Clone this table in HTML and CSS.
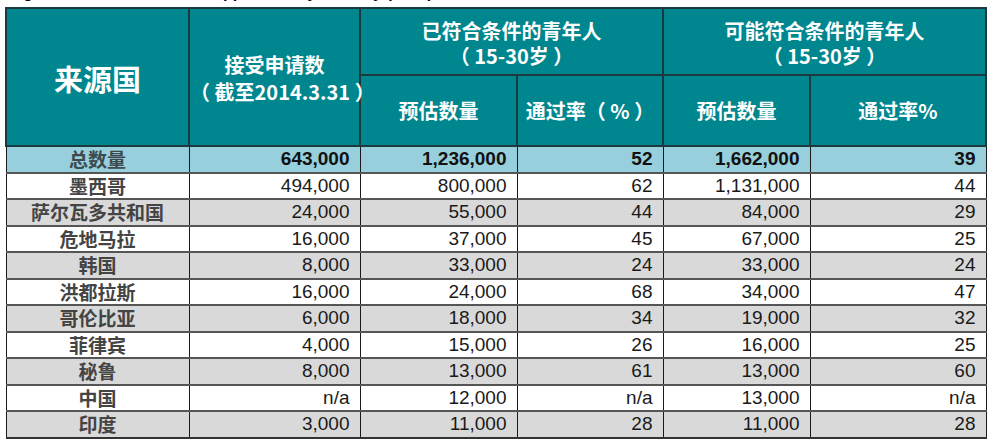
FILE: index.html
```html
<!DOCTYPE html>
<html lang="zh">
<head>
<meta charset="utf-8">
<title>来源国</title>
<link rel="stylesheet" href="styles.css">
</head>
<body>
<div class="page">
  <div class="caption"><span>Figure 2: Estimated DACA Applicants by Country (2014)</span></div>
  <table class="data">
    <colgroup>
      <col class="c1"><col class="c2"><col class="c3"><col class="c4"><col class="c5"><col class="c6">
    </colgroup>
    <thead>
      <tr class="h1">
        <th rowspan="2" class="big">来源国</th>
        <th rowspan="2" class="two"><span class="ln">接受申请数</span><span class="ln">（ 截至2014.3.31 ）</span></th>
        <th colspan="2"><span class="ln">已符合条件的青年人</span><span class="ln">（ 15-30岁 ）</span></th>
        <th colspan="2"><span class="ln">可能符合条件的青年人</span><span class="ln">（ 15-30岁 ）</span></th>
      </tr>
      <tr class="h2">
        <th>预估数量</th>
        <th>通过率（ % ）</th>
        <th>预估数量</th>
        <th>通过率%</th>
      </tr>
    </thead>
    <tbody>
      <tr class="total"><td class="name">总数量</td><td>643,000</td><td>1,236,000</td><td>52</td><td>1,662,000</td><td>39</td></tr>
      <tr class="w"><td class="name">墨西哥</td><td>494,000</td><td>800,000</td><td>62</td><td>1,131,000</td><td>44</td></tr>
      <tr class="g"><td class="name">萨尔瓦多共和国</td><td>24,000</td><td>55,000</td><td>44</td><td>84,000</td><td>29</td></tr>
      <tr class="w"><td class="name">危地马拉</td><td>16,000</td><td>37,000</td><td>45</td><td>67,000</td><td>25</td></tr>
      <tr class="g"><td class="name">韩国</td><td>8,000</td><td>33,000</td><td>24</td><td>33,000</td><td>24</td></tr>
      <tr class="w"><td class="name">洪都拉斯</td><td>16,000</td><td>24,000</td><td>68</td><td>34,000</td><td>47</td></tr>
      <tr class="g"><td class="name">哥伦比亚</td><td>6,000</td><td>18,000</td><td>34</td><td>19,000</td><td>32</td></tr>
      <tr class="w"><td class="name">菲律宾</td><td>4,000</td><td>15,000</td><td>26</td><td>16,000</td><td>25</td></tr>
      <tr class="g"><td class="name">秘鲁</td><td>8,000</td><td>13,000</td><td>61</td><td>13,000</td><td>60</td></tr>
      <tr class="w"><td class="name">中国</td><td>n/a</td><td>12,000</td><td>n/a</td><td>13,000</td><td>n/a</td></tr>
      <tr class="g"><td class="name">印度</td><td>3,000</td><td>11,000</td><td>28</td><td>11,000</td><td>28</td></tr>
    </tbody>
  </table>
</div>
</body>
</html>
```
FILE: styles.css
```css
html, body {
  margin: 0;
  padding: 0;
  background: #ffffff;
}
.page {
  padding: 0 5px;
}
.caption {
  height: 5px;
  overflow: hidden;
}
.caption span {
  display: block;
  margin-top: -15px;
  padding-left: 4px;
  font: bold 16px/16px "Liberation Sans", Arial, sans-serif;
  color: #000;
  white-space: nowrap;
}
.data {
  border-collapse: collapse;
  table-layout: fixed;
  width: 980px;
  margin-top: 2px;
}
.c1 { width: 183px; }
.c2 { width: 171px; }
.c3 { width: 157px; }
.c4 { width: 146px; }
.c5 { width: 147px; }
.c6 { width: 176px; }

.data th {
  background: #00868e;
  color: #ffffff;
  font-family: "Noto Sans CJK SC", "Liberation Sans", sans-serif;
  font-weight: bold;
  font-size: 20px;
  line-height: 26px;
  border: 2px solid #1c3a3e;
  text-align: center;
  vertical-align: middle;
  padding: 0;
}
.data th .ln {
  display: block;
  height: 25px;
  line-height: 25px;
  white-space: nowrap;
}
.data th.two .ln {
  height: 27px;
  line-height: 27px;
}
.data th.big {
  font-size: 29px;
}
.h1 { height: 67px; }
.h2 { height: 71px; }
.h1 th { padding-top: 2px; }

.data td {
  border: 2px solid #4a4a4a;
  border-left-width: 1.5px;
  border-right-width: 1.5px;
  border-color: #555555 #1a1a1a;
  font-family: "Liberation Sans", Arial, sans-serif;
  font-size: 19px;
  line-height: 22px;
  color: #1a1a1a;
  text-align: right;
  padding: 0 10px 0 0;
  height: 24.5px;
}
.data td.name {
  font-family: "Noto Sans CJK SC", "Liberation Sans", sans-serif;
  font-weight: bold;
  color: #444444;
  text-align: center;
  padding: 0;
  font-size: 19px;
}
.data tr.w td { background: #ffffff; }
.data tr.g td { background: #d9d9d9; }
.data tr.total td {
  background: #97cfdc;
  font-weight: bold;
  color: #111111;
}
.data tr.total td.name {
  color: #3c4a4e;
}
.data tbody tr:last-child td {
  border-bottom-color: #333333;
}
```
